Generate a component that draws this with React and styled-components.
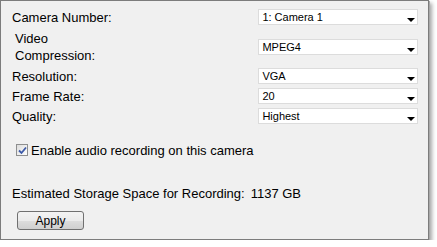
import React from 'react';
import styled, { createGlobalStyle } from 'styled-components';

const GlobalStyle = createGlobalStyle`
  html, body {
    margin: 0;
    padding: 0;
    background: #ffffff;
  }
  body {
    font-family: 'Liberation Sans', Arial, sans-serif;
  }
`;

const Panel = styled.div`
  box-sizing: border-box;
  width: 429px;
  height: 240px;
  background: #f0f0f0;
  border: 1px solid #7c7c7c;
  box-shadow: 1px 1px 0 #a8a8a8, 3px 3px 4px rgba(0, 0, 0, 0.35);
  padding: 6px 10px 0 11px;
  display: flex;
  flex-direction: column;
  color: #000;
`;

const Row = styled.div`
  display: flex;
  align-items: center;
  height: ${({ tall }) => (tall ? '39px' : '20px')};
`;

const Label = styled.div`
  width: 247px;
  font-size: 13px;
  line-height: 17px;
  padding-left: ${({ indent }) => (indent ? '3px' : '0')};
  box-sizing: border-box;
`;

const Select = styled.div`
  box-sizing: border-box;
  width: 160px;
  height: 16px;
  background: #fff;
  border: 1px solid #dcdcdc;
  display: flex;
  align-items: center;
  justify-content: space-between;
  padding: 0 2px 0 3px;
  font-size: 11px;
`;

const Arrow = styled.span`
  width: 0;
  height: 0;
  border-left: 4px solid transparent;
  border-right: 4px solid transparent;
  border-top: 4px solid #000;
  margin-top: 6px;
`;

const CheckRow = styled.label`
  display: flex;
  align-items: center;
  gap: 3px;
  margin-top: 17px;
  padding-left: 4px;
  font-size: 13px;
  height: 14px;
`;

const Box = styled.span`
  box-sizing: border-box;
  width: 12px;
  height: 12px;
  border: 1px solid #8e8f8f;
  background: linear-gradient(135deg, #dcdcdc, #ffffff);
  display: flex;
  align-items: center;
  justify-content: center;
`;

const Storage = styled.div`
  font-size: 13px;
  margin-top: 29px;
  height: 16px;
  line-height: 16px;
`;

const Value = styled.span`
  margin-left: 6px;
`;

const Button = styled.button`
  box-sizing: border-box;
  margin-top: 9px;
  margin-left: 5px;
  width: 67px;
  height: 19px;
  border: 1px solid #707070;
  border-radius: 3px;
  background: linear-gradient(#f3f3f3 0%, #ebebeb 50%, #dddddd 51%, #cfcfcf 100%);
  font-family: 'Liberation Sans', Arial, sans-serif;
  font-size: 12px;
  color: #000;
  padding: 0;
`;

const fields = [
  { label: 'Camera Number:', value: '1: Camera 1' },
  { label: ['Video', 'Compression:'], value: 'MPEG4', tall: true },
  { label: 'Resolution:', value: 'VGA' },
  { label: 'Frame Rate:', value: '20' },
  { label: 'Quality:', value: 'Highest' },
];

export default function App() {
  return (
    <>
      <GlobalStyle />
      <Panel>
        {fields.map((f) => (
          <Row key={f.value} tall={f.tall}>
            {Array.isArray(f.label) ? (
              <Label indent>
                {f.label[0]}
                <br />
                {f.label[1]}
              </Label>
            ) : (
              <Label>{f.label}</Label>
            )}
            <Select>
              <span>{f.value}</span>
              <Arrow />
            </Select>
          </Row>
        ))}
        <CheckRow>
          <Box>
            <svg width="9" height="9" viewBox="0 0 9 9">
              <path d="M1 4.5 L3.5 7 L8 1.5" stroke="#3d5aa8" strokeWidth="1.8" fill="none" />
            </svg>
          </Box>
          Enable audio recording on this camera
        </CheckRow>
        <Storage>
          Estimated Storage Space for Recording:<Value>1137 GB</Value>
        </Storage>
        <div>
          <Button>Apply</Button>
        </div>
      </Panel>
    </>
  );
}
